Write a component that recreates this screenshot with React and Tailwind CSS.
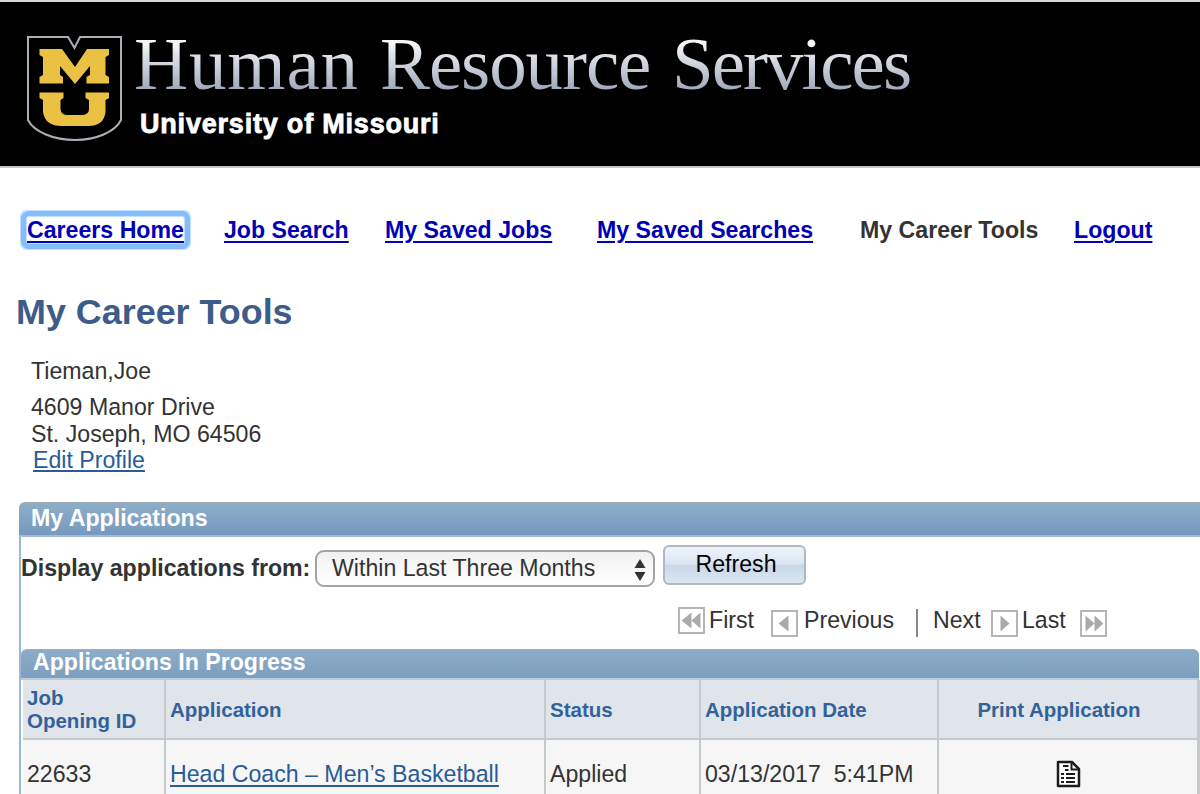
import React, { useState } from "react";

const navLinks = [
  { label: "Careers Home", slot: "w-[197px]", focused: true },
  { label: "Job Search", slot: "w-[161px]" },
  { label: "My Saved Jobs", slot: "w-[212px]" },
  { label: "My Saved Searches", slot: "w-[263px]" },
  { label: "My Career Tools", slot: "w-[214px]", current: true },
  { label: "Logout", slot: "w-[100px]" },
];

const applications = [
  {
    id: "22633",
    title: "Head Coach – Men’s Basketball",
    status: "Applied",
    date: "03/13/2017",
    time: "5:41PM",
  },
];

const columns =
  "grid grid-cols-[141px_378px_153px_236px_258px] gap-x-[2px] bg-[#c6cacd] border-r-2 border-[#c6cacd]";

function Shield() {
  return (
    <svg className="block h-[110px] w-[98px]" viewBox="0 0 98 110">
      <path
        d="M2 4H42L48.500 15L54 4H95V87C89 99 70 107 49 107C28 107 8 99 2 87Z"
        fill="#000"
        stroke="#a9b0b8"
        strokeWidth="2"
      />
      <path
        d="M13.500 16H36L49 34L61 16H83V22L79.500 24V42L83 44V50.500H60.500V44L64 42V33L49 51L34 33V42L37 44V50.500H13.500V44L17 42V24L13.500 22Z"
        fill="#ebc144"
      />
      <path
        d="M13.500 59.500H37.500V65L34.500 67V76Q35 82 42 82H55Q63 82 63 76V67L59.500 65V59.500H83V65L79.500 67V79Q78 93 62 93H36Q19 93 17 79V67L13.500 65Z"
        fill="#ebc144"
      />
    </svg>
  );
}

function Header() {
  const metal =
    "bg-gradient-to-b from-[#f4f6f8] from-25% to-[#a3acbb] to-80% bg-clip-text text-transparent";
  return (
    <header className="h-[168px] border-t-2 border-b-2 border-t-[#d5d9dc] border-b-[#c5c6cb] bg-black pt-[31px] pl-[26px] flex">
      <Shield />
      <div className="ml-[10px] whitespace-nowrap">
        <div className="-mt-[8px] flex h-[78px] items-center font-['Liberation_Serif',serif] text-[75px] leading-[82px]">
          <span className={`w-[246px] tracking-[0.8px] ${metal}`}>Human</span>
          <span className={`w-[292px] tracking-[-1.100px] ${metal}`}>Resource</span>
          <span className={`w-[250px] tracking-[-2px] ${metal}`}>Services</span>
        </div>
        <div className="pl-[6px] text-[27px] font-bold leading-[42px] tracking-[0.800px] text-white [-webkit-text-stroke:0.8px_white]">
          University of Missouri
        </div>
      </div>
    </header>
  );
}

function NavItem({ label, slot, focused, current }) {
  return (
    <div className={slot}>
      {current ? (
        <span className="text-[#333333]">{label}</span>
      ) : (
        <a
          href="#"
          className={
            focused
              ? "inline-block rounded-[2px] text-[#0000b4] underline decoration-2 underline-offset-[3px] outline-5 outline-offset-[1px] outline-[#84bcfc] shadow-[0_0_0_7px_#c4e0ff]"
              : "text-[#0000b4] underline decoration-2 underline-offset-[3px]"
          }
        >
          {label}
        </a>
      )}
    </div>
  );
}

function PagerIcon({ type }) {
  const paths = {
    first: "M14 6V22L4 14ZM23 6V22L14 14Z",
    previous: "M18 6V22L8 14Z",
    next: "M10 6V22L19 14Z",
    last: "M6 6V22L15 14ZM15 6V22L24 14Z",
  };
  return (
    <svg className="block h-[28px] w-[28px]" viewBox="0 0 28 28">
      <rect x="1" y="1" width="25" height="25" fill="#fff" stroke="#b5b5b5" strokeWidth="2" />
      <path d={paths[type]} fill="#aaaaad" transform="translate(-0.5 -0.5)" />
    </svg>
  );
}

function PrintIcon() {
  return (
    <svg className="block h-[28px] w-[25px]" viewBox="0 0 25 28">
      <path d="M2 2H16L23 9V26H2Z" fill="#fff" stroke="#1c1c1c" strokeWidth="2.500" strokeLinejoin="round" />
      <path d="M15.500 2V9.500H23" fill="none" stroke="#1c1c1c" strokeWidth="2" />
      <path
        d="M7 6H12.500M9 10H12.500M5 14H8M10 14H19M5 18H8M10 18H19M5 22H8M10 22H19"
        stroke="#1c1c1c"
        strokeWidth="2"
      />
    </svg>
  );
}

function App() {
  const [range, setRange] = useState("Within Last Three Months");

  return (
    <div className="h-[794px] w-[1200px] overflow-hidden bg-white font-['Liberation_Sans',Arial,sans-serif] text-[23.150px] text-[#333333]">
      <Header />

      <nav className="mt-[49px] flex pl-[27px] font-bold leading-[26px] whitespace-nowrap">
        {navLinks.map((link) => (
          <NavItem key={link.label} {...link} />
        ))}
      </nav>

      <h1 className="mt-[49px] pl-[16px] text-[35.900px] font-bold leading-[40px] text-[#3c5c8a]">
        My Career Tools
      </h1>

      <div className="pt-[26px] pl-[31px] leading-[27px]">
        <p>Tieman,Joe</p>
        <p className="mt-[9px]">4609 Manor Drive</p>
        <p>St. Joseph, MO 64506</p>
        <a
          href="#"
          className="ml-[2px] block w-fit leading-[25px] text-[#285c98] underline decoration-2 underline-offset-[2px]"
        >
          Edit Profile
        </a>
      </div>

      <section className="mt-[29px] ml-[19px]">
        <h2 className="h-[35px] rounded-tl-[6px] border-t border-b-2 border-t-[#a0abb5] border-b-[#a2bbd4] bg-gradient-to-b from-[#8daec8] to-[#7799bf] pl-[12px] font-bold leading-[30px] text-white">
          My Applications
        </h2>

        <div className="border-l-2 border-[#9bb8d8]">
          <div className="flex h-[64px] items-start pt-[8px]">
            <label className="w-[294px] pt-[10px] font-bold leading-[26px] whitespace-nowrap">
              Display applications from:
            </label>
            <button
              type="button"
              onClick={() => setRange("Within Last Three Months")}
              className="mt-[5px] flex h-[37px] w-[340px] items-center justify-between rounded-[9px] border-2 border-[#a3a3a3] bg-gradient-to-b from-[#f1f1f1] to-white pr-[7px] pb-px pl-[15px] whitespace-nowrap"
            >
              {range}
              <svg className="mt-[3px] h-[22px] w-[12px]" viewBox="0 0 12 22">
                <path d="M6 0L11.500 9H0.500ZM6 22L11.500 13H0.500Z" fill="#333" />
              </svg>
            </button>
            <button
              type="button"
              className="ml-[8px] h-[40px] w-[143px] rounded-[6px] border-2 border-[#b2b8c2] bg-[linear-gradient(#eef3fa_0%,#dbe5f1_48%,#c8d7e8_50%,#dce6f3_100%)] pl-[3px] pb-[2px] text-center text-black"
            >
              Refresh
            </button>
          </div>

          <div className="flex h-[48px] items-start pt-[5px] pl-[657px] leading-[28px] whitespace-nowrap">
            <span className="pt-px">
              <PagerIcon type="first" />
            </span>
            <span className="w-[65px] pl-[3px]">First</span>
            <span className="pt-[4px]">
              <PagerIcon type="previous" />
            </span>
            <span className="w-[117px] pl-[5px]">Previous</span>
            <span className="mt-[3px] h-[28px] w-[2px] bg-[#888888]" />
            <span className="w-[73px] pl-[15px]">Next</span>
            <span className="pt-[4px]">
              <PagerIcon type="next" />
            </span>
            <span className="w-[61px] pl-[3px]">Last</span>
            <span className="pt-[4px]">
              <PagerIcon type="last" />
            </span>
          </div>

          <h3 className="mr-px h-[31px] rounded-t-[6px] border-t border-b-2 border-t-[#a0abb5] border-b-[#c6cacd] bg-[linear-gradient(#8cadc9_0%,#7f9fbe_90%,#73a1d0_94%)] pl-[12px] font-bold leading-[25px] text-white">
            Applications In Progress
          </h3>

          <div className="pl-[2px]">
            <div className={`${columns} border-b-2 text-[20.500px] font-bold leading-[23px] text-[#336299] [&>div]:h-[58px] [&>div]:items-center [&>div]:bg-[#dfe5eb] [&>div]:pl-[4px]`}>
              <div className="flex">
                Job
                <br />
                Opening ID
              </div>
              <div className="flex">Application</div>
              <div className="flex">Status</div>
              <div className="flex">Application Date</div>
              <div className="flex justify-center pr-[22px]">Print Application</div>
            </div>
            {applications.map((item) => (
              <div
                key={item.id}
                className={`${columns} leading-[28px] whitespace-nowrap [&>div]:h-[70px] [&>div]:bg-[#f6f6f6] [&>div]:pt-[20px] [&>div]:pl-[4px]`}
              >
                <div>{item.id}</div>
                <div>
                  <a href="#" className="text-[#285c98] underline decoration-2 underline-offset-[3px]">
                    {item.title}
                  </a>
                </div>
                <div>{item.status}</div>
                <div>
                  {item.date}&nbsp; {item.time}
                </div>
                <div className="flex items-start justify-center pr-[4px]">
                  <PrintIcon />
                </div>
              </div>
            ))}
          </div>
        </div>
      </section>
    </div>
  );
}

export default App;
